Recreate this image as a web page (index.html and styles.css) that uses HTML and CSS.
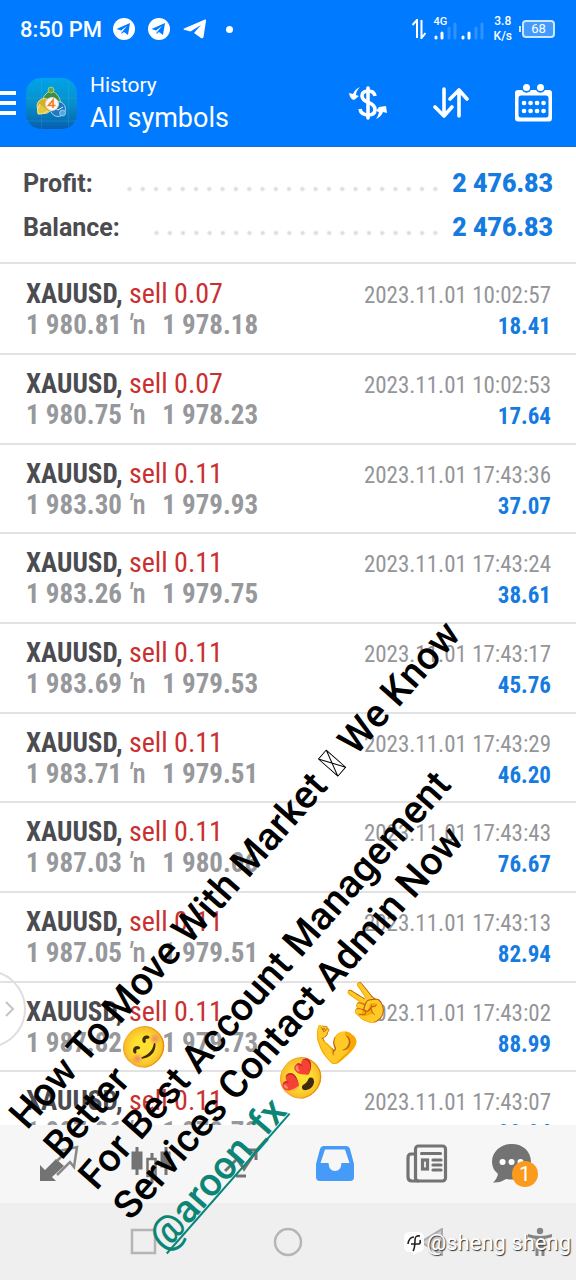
FILE: index.html
```html
<!DOCTYPE html>
<html lang="en">
<head>
<meta charset="utf-8">
<meta name="viewport" content="width=device-width, initial-scale=1">
<title>History</title>
<link rel="stylesheet" href="styles.css">
</head>
<body>
<div class="app">
  <header class="top">
    <div class="status">
      <span class="clock">8:50 PM</span>
      <svg class="tg" width="22" height="22" viewBox="0 0 22 22"><circle cx="11" cy="11" r="11" fill="#fff"/><path d="M3.500 11 17 5 15 17 11 14 8.500 16 8 12.500Z" fill="#007aff"/><path d="M8 12.500 14 8 9.500 13.500 8.700 15.500Z" fill="#fff"/></svg>
      <svg class="tg" width="22" height="22" viewBox="0 0 22 22"><circle cx="11" cy="11" r="11" fill="#fff"/><path d="M3.500 11 17 5 15 17 11 14 8.500 16 8 12.500Z" fill="#007aff"/><path d="M8 12.500 14 8 9.500 13.500 8.700 15.500Z" fill="#fff"/></svg>
      <svg class="plane" width="24" height="20" viewBox="0 0 24 20"><path d="M1 9.500 22 .500Q23.500 0 23 2L20.500 18Q20 20 18 19L11 14 18 6 7.500 12.500 1 10.800Q0 10 1 9.500Z" fill="#fff"/></svg>
      <span class="dot"></span>
      <span class="status-right">
        <svg width="14" height="20" viewBox="0 0 14 20" fill="none" stroke="#fff" stroke-width="2"><path d="M5 19V1L.500 6M9.500 1V19L13.500 14"/></svg>
        <span class="signal"><small class="net">4G</small>
          <svg width="51" height="18" viewBox="0 0 51 18" stroke-width="3" stroke-linecap="round"><path d="M2 16v-1M8 16v-5M29 16v-1M35 16v-5" stroke="#fff"/><path d="M15 16V6M21 16V2M42 16V6M48 16V2" stroke="#2f92ff"/></svg>
        </span>
        <span class="speed">3.8<br>K/s</span>
        <span class="battery">68</span>
      </span>
    </div>
    <div class="bar">
      <button class="menu" aria-label="Menu"><i></i><i></i><i></i></button>
      <svg class="logo" width="51" height="51" viewBox="0 0 51 51">
        <defs><linearGradient id="lg" x1="0" y1="0" x2="0" y2="1"><stop offset="0" stop-color="#00a4e8"/><stop offset=".5" stop-color="#078fcb"/><stop offset="1" stop-color="#075fae"/></linearGradient></defs>
        <rect width="51" height="51" rx="15" fill="url(#lg)"/>
        <path d="M15.500 0V51M42.500 3V48M0 20H51M0 43H51" stroke="#38b4e5" stroke-width=".5" opacity=".5"/>
        <path d="M25 12Q35 17 35 28L25 27 16 26Q16 17 25 12Z" fill="#3f8d44" stroke="#cfe6a4" stroke-width=".8"/>
        <circle cx="25" cy="12" r="3" fill="#61a94d" stroke="#cfe6a4" stroke-width=".6"/>
        <ellipse cx="18.500" cy="28" rx="7.500" ry="7.500" fill="#d3ae2a" stroke="#fff0a0" stroke-width=".8"/><path d="M14 26Q10 32 12 36Q16 37 22 33" fill="#e5c73d" stroke="#fff0a0" stroke-width=".8"/>
        <ellipse cx="32" cy="31" rx="7.500" ry="7.500" fill="#2178bd" stroke="#bce4fa" stroke-width=".8"/><circle cx="36.500" cy="35" r="3" fill="#54a8e0" stroke="#bce4fa" stroke-width=".6"/><path d="M29 30 32 32 37 29" stroke="#d8f0ff" fill="none"/>
        <circle cx="26" cy="26" r="6.500" fill="#fff8ed" stroke="#d7d6c9"/><path d="M27 30V22L22.500 27.500H29.500" fill="none" stroke="#ef7b26" stroke-width="1.600"/>
      </svg>
      <div class="titles"><span class="title">History</span><span class="subtitle">All symbols</span></div>
      <div class="actions">
        <button aria-label="Symbol"><svg width="38" height="34" viewBox="0 0 38 34" fill="none" stroke="#fff"><path d="M26 10Q25 5 19.500 5Q13 5 13 10Q13 14 19.500 16.500Q26 19 26 23.500Q26 29 19.500 29Q12 29 11 23" stroke-width="3.600"/><path d="M19 2V32" stroke-width="3.600" stroke-linecap="round"/><path d="M11 1Q6 3 4 8L0 7Q1 13 5 14L10 10 7 9Q7 5 11 1ZM27 33Q29 31 30 26L27 25 30 21 37 20 38 27 34 26Q32 31 27 33Z" fill="#fff" stroke="none"/></svg></button>
        <button aria-label="Sort"><svg width="36" height="32" viewBox="0 0 36 32" fill="none" stroke="#fff" stroke-width="3.600" stroke-linecap="round" stroke-linejoin="round"><path d="M11 2V29M2 20 11 29 19 20M26 29V3M17 12 26 3 34 12"/></svg></button>
        <button aria-label="Calendar"><svg width="37" height="38" viewBox="0 0 37 38"><path fill="#fff" fill-rule="evenodd" d="M3 6H7A5 5 0 0 0 16 6H21A5 5 0 0 0 30 6H34Q37 6 37 9V34Q37 37.500 34 37.500H3Q0 37.500 0 34V9Q0 6 3 6ZM6 11.500Q3.500 11.500 3.500 14V31Q3.500 33.500 6 33.500H31Q33.500 33.500 33.500 31V14Q33.500 11.500 31 11.500Z"/><circle cx="11.500" cy="3.500" r="3.500" fill="#fff"/><circle cx="25.500" cy="3.500" r="3.500" fill="#fff"/><path d="M9 19h.1M15.500 19h.1M22 19h.1M28.500 19h.1M9 27h.1M15.500 27h.1M22 27h.1M28.500 27h.1" stroke="#fff" stroke-width="4.600" stroke-linecap="round"/></svg></button>
      </div>
    </div>
  </header>

  <section class="summary">
    <div class="sum"><span>Profit:</span><i class="leader"></i><b>2 476.83</b></div>
    <div class="sum"><span>Balance:</span><i class="leader"></i><b>2 476.83</b></div>
  </section>

  <ul class="deals">
    <li><div class="line"><span class="sym">XAUUSD, <em>sell 0.07</em></span><time>2023.11.01 10:02:57</time></div><div class="line"><span class="price">1 980.81 <u><i>′</i>n</u>&nbsp; 1 978.18</span><b>18.41</b></div></li>
    <li><div class="line"><span class="sym">XAUUSD, <em>sell 0.07</em></span><time>2023.11.01 10:02:53</time></div><div class="line"><span class="price">1 980.75 <u><i>′</i>n</u>&nbsp; 1 978.23</span><b>17.64</b></div></li>
    <li><div class="line"><span class="sym">XAUUSD, <em>sell 0.11</em></span><time>2023.11.01 17:43:36</time></div><div class="line"><span class="price">1 983.30 <u><i>′</i>n</u>&nbsp; 1 979.93</span><b>37.07</b></div></li>
    <li><div class="line"><span class="sym">XAUUSD, <em>sell 0.11</em></span><time>2023.11.01 17:43:24</time></div><div class="line"><span class="price">1 983.26 <u><i>′</i>n</u>&nbsp; 1 979.75</span><b>38.61</b></div></li>
    <li><div class="line"><span class="sym">XAUUSD, <em>sell 0.11</em></span><time>2023.11.01 17:43:17</time></div><div class="line"><span class="price">1 983.69 <u><i>′</i>n</u>&nbsp; 1 979.53</span><b>45.76</b></div></li>
    <li><div class="line"><span class="sym">XAUUSD, <em>sell 0.11</em></span><time>2023.11.01 17:43:29</time></div><div class="line"><span class="price">1 983.71 <u><i>′</i>n</u>&nbsp; 1 979.51</span><b>46.20</b></div></li>
    <li><div class="line"><span class="sym">XAUUSD, <em>sell 0.11</em></span><time>2023.11.01 17:43:43</time></div><div class="line"><span class="price">1 987.03 <u><i>′</i>n</u>&nbsp; 1 980.06</span><b>76.67</b></div></li>
    <li><div class="line"><span class="sym">XAUUSD, <em>sell 0.11</em></span><time>2023.11.01 17:43:13</time></div><div class="line"><span class="price">1 987.05 <u><i>′</i>n</u>&nbsp; 1 979.51</span><b>82.94</b></div></li>
    <li><div class="line"><span class="sym">XAUUSD, <em>sell 0.11</em></span><time>2023.11.01 17:43:02</time></div><div class="line"><span class="price">1 987.82 <u><i>′</i>n</u>&nbsp; 1 979.73</span><b>88.99</b></div></li>
    <li><div class="line"><span class="sym">XAUUSD, <em>sell 0.11</em></span><time>2023.11.01 17:43:07</time></div><div class="line"><span class="price">1 987.86 <u><i>′</i>n</u>&nbsp; 1 978.78</span><b>99.94</b></div></li>
  </ul>

  <nav class="tabs">
    <button aria-label="Quotes"><svg width="40" height="38" viewBox="0 0 40 38"><path d="M1 36V20L6 25 17 14 25 21 13 32 17 36Z" fill="#737373"/><path d="M18 30 31 17 35 22 38 2 20 6 24 10 18 16" fill="none" stroke="#888" stroke-width="2.500"/></svg></button>
    <button aria-label="Charts"><svg width="40" height="38" viewBox="0 0 40 38" fill="#737373" stroke="#737373"><path d="M6 2V30M35 2V30" stroke-width="3"/><rect x="1" y="7" width="10" height="17"/><rect x="30" y="7" width="9" height="15"/><path d="M21 8V38" stroke-width="3"/><rect x="16.500" y="14" width="8" height="17" fill="#f6f6f6" stroke-width="2.500"/></svg></button>
    <button aria-label="Trade"><svg width="38" height="38" viewBox="0 0 38 38" fill="none" stroke="#737373" stroke-width="3"><path d="M1 26 13 14 20 24 32 6M22 5H32V15M12 31H22"/></svg></button>
    <button aria-label="History" aria-current="page"><svg width="40" height="38" viewBox="0 0 40 38"><path fill="#459bf7" fill-rule="evenodd" d="M9 1H31Q34 1 35 4L39 19V32Q39 36 35 36H5Q1 36 1 32V19L5 4Q6 1 9 1ZM10 4.500 5.500 18H13.500Q14 26 20 26Q26 26 26.500 18H34.500L30 4.500Z"/></svg></button>
    <button aria-label="News"><svg width="42" height="40" viewBox="0 0 42 40" fill="none" stroke="#737373" stroke-width="3.200"><rect x="9.500" y="2" width="30" height="35" rx="3"/><path d="M8 10H5Q2 10 2 14V33Q2 37 6 37H12M15.500 9.500H34.500M27 16H35M27 21H35M27 26H35" stroke-linecap="round"/><rect x="16.500" y="16" width="5" height="9"/></svg></button>
    <button class="chat" aria-label="Messages, 1 unread"><svg width="40" height="40" viewBox="0 0 40 40"><path d="M20 0C31 0 39 7.500 39 18C39 29 31 35.500 20 35.500Q16 35.500 14 35Q8 39 1 38.500Q5 35 6 30Q0 25 0 18C0 7.500 9 0 20 0Z" fill="#737373"/><path d="M10.500 18h.1M19.500 18h.1M28.500 18h.1" stroke="#fff" stroke-width="6" stroke-linecap="round"/></svg><span class="badge">1</span></button>
  </nav>
  <nav class="system">
    <button aria-label="Recent"><svg width="28" height="28" viewBox="0 0 28 28"><rect x="2" y="2" width="23" height="23" fill="none" stroke="#b5b5b5" stroke-width="2.500"/></svg></button>
    <button aria-label="Home"><svg width="30" height="30" viewBox="0 0 30 30"><circle cx="15" cy="15" r="13" fill="none" stroke="#b5b5b5" stroke-width="2.500"/></svg></button>
    <button aria-label="Back"><svg width="26" height="28" viewBox="0 0 26 28"><path d="M23 1V27L2 14Z" fill="#ccc" stroke="#aaa" stroke-width="2"/></svg></button>
    <button aria-label="Accessibility"><svg width="28" height="30" viewBox="0 0 28 30" fill="#858585"><circle cx="14" cy="4" r="3.200"/><path d="M2 7Q14 11 26 7V10Q22 11.500 18.500 12V29H15.500V21H12.500V29H9.500V12Q6 11.500 2 10Z"/></svg></button>
  </nav>

  <button class="drawer" aria-label="Open panel"><svg width="12" height="18" viewBox="0 0 12 18"><path d="M2 2 9 9 2 16" fill="none" stroke="#c4c4c4" stroke-width="2"/></svg></button>

  <div class="caption">How To Move With Market <svg class="tofu" width="13" height="27" viewBox="0 0 13 27"><path d="M.500.500H12.500V26.500H.500ZM.500.500 12.500 26.500M12.500.500 .500 26.500" fill="none" stroke="#000"/></svg> We Know<br>Better 😊<br>For Best Account Management<br>Services Contact Admin Now<br><a href="#">@aroon_fx</a> 😍💪✌️</div>

  <div class="credit"><svg width="20" height="23" viewBox="0 0 20 23"><path d="M6 0H14Q20 0 20 6V14Q20 20 14 20L10 23 8 20H6Q0 20 0 14V6Q0 0 6 0Z" fill="#fff"/><path d="M9 19Q11 16 11 8Q11 3 16 4M4 12Q5 5 10 5M7 12H15Q17 11 16 8" fill="none" stroke="#222" stroke-width="1.600"/></svg><span>@sheng sheng</span></div>
</div>
</body>
</html>
```
FILE: styles.css
```css
* { box-sizing: border-box; }
body { margin: 0; font-family: Roboto, "Liberation Sans", sans-serif; background: #fff; }
button { border: 0; padding: 0; background: none; font: inherit; color: inherit; display: flex; align-items: center; justify-content: center; }
svg { flex: none; display: block; }

.app { position: relative; height: 100vh; display: flex; flex-direction: column; overflow: hidden; }

.top { flex: none; background: #007aff; color: #fff; border-bottom: 1px solid #1a6cc8; }
.status { display: flex; align-items: center; height: 60px; padding: 0 21px 2px 20px; }
.clock { font-size: 22px; font-weight: 500; margin-right: 11px; }
.tg { margin-right: 13px; }
.plane { margin-right: 19px; }
.dot { width: 7px; height: 7px; border-radius: 50%; background: #fff; }
.status-right { margin-left: auto; display: flex; align-items: center; }
.signal { position: relative; margin: 3px 9px 0 8px; }
.net { position: absolute; left: 0; top: -6px; font-size: 11px; line-height: 12px; font-weight: 500; }
.speed { font-size: 12px; line-height: 15px; font-weight: 500; text-align: center; margin-right: 10px; }
.battery { position: relative; width: 33px; height: 18px; border: 2px solid #cfe6ff; border-radius: 4px; font-size: 13px; line-height: 14px; text-align: center; background: #429cff; }
.battery::before { content: ""; position: absolute; left: -5px; top: 4px; width: 2px; height: 6px; background: #cfe6ff; }

.bar { display: flex; align-items: center; height: 86px; padding: 0 24px 0 0; }
.menu { flex-direction: column; gap: 6px; width: 16px; align-items: stretch; margin-right: 10px; }
.menu i { height: 4px; background: #fff; }
.logo { margin-right: 13px; }
.titles { display: flex; flex-direction: column; gap: 2px; white-space: nowrap; }
.title { font-size: 21px; line-height: 28px; }
.subtitle { font-size: 27px; line-height: 34px; }
.actions { margin-left: auto; display: flex; align-items: center; gap: 46px; }

.summary { flex: none; height: 117px; padding: 14px 23px; border-bottom: 2px solid #e2e2e4; font-size: 25px; font-weight: 700; color: #4b4b50; }
.sum { display: flex; align-items: center; height: 44px; }
.sum b { color: #157be0; }
.leader { flex: 1; height: 6px; margin: 12px 10px 0 30px; background: radial-gradient(circle at center, #dcdcdc 1px, transparent 3px) right center / 13px 6px space no-repeat; }

.deals { flex: 1; min-height: 0; margin: 0; padding: 1px 0 0; overflow: hidden; list-style: none; font-family: "Roboto Condensed", "Liberation Sans Narrow", Roboto, sans-serif; }
.deals li { height: 90px; padding: 13px 25px 0 26px; border-bottom: 2px solid #e2e2e4; }
.deals li:nth-child(3n) { height: 89px; }
.line { display: flex; justify-content: space-between; align-items: baseline; height: 32px; line-height: 31px; white-space: nowrap; }
.sym { font-size: 27px; font-weight: 700; color: #4b4b50; }
.sym em { font-style: normal; font-size: 28px; font-weight: 400; color: #c9302f; }
.line time { font-size: 23px; color: #949598; }
.price { font-size: 27px; font-weight: 700; color: #97989b; }
.price u { text-decoration: none; font-weight: 500; margin-right: 4px; }
.price i { font-style: italic; }
.line b { font-size: 23px; color: #157be0; }

.tabs { flex: none; height: 78px; padding: 0 33px 0 21px; background: #f6f6f6; display: flex; align-items: center; justify-content: space-between; }
.tabs button { width: 76px; }
.tabs .chat { position: relative; width: 62px; }
.badge { position: absolute; left: 31px; top: 17px; width: 26px; height: 26px; border-radius: 50%; background: #fa9b1e; color: #fff; font-size: 21px; line-height: 26px; text-align: center; }
.system { flex: none; height: 77px; background: #efefef; display: grid; grid-template-columns: 1fr 1fr 1fr 72px; align-items: center; padding-left: 72px; }
.system button:last-child { justify-content: flex-start; padding-left: 22px; }

.drawer { position: absolute; left: -52px; top: 970px; width: 78px; height: 78px; border: 2px solid #dedede; border-radius: 50%; justify-content: flex-end; padding-right: 8px; }

.caption { position: absolute; left: 0; top: 1107px; transform-origin: 0 0; transform: rotate(-48.7deg); font-size: 39px; line-height: 46px; font-weight: 500; color: #000; white-space: nowrap; }
.caption a { color: #0c8577; text-decoration-thickness: 2px; text-decoration-skip-ink: none; }
.tofu { display: inline-block; margin: 0 4px; }

.credit { position: absolute; right: 5px; bottom: 23px; display: flex; align-items: center; gap: 3px; font-size: 22px; line-height: 28px; color: #fff; text-shadow: 1px 1px 1px #333; }
```
